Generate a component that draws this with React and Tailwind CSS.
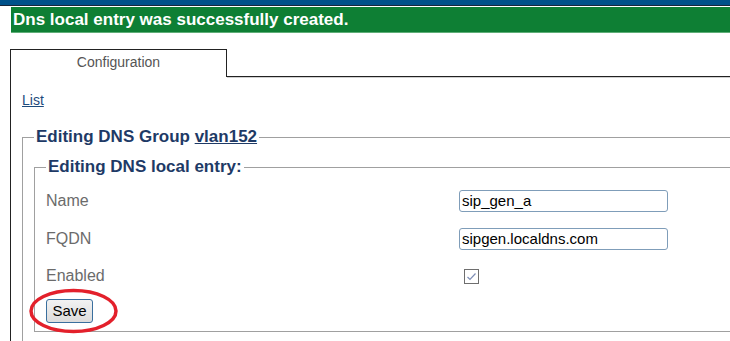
export default function App() {
  return (
    <div className="relative w-[730px] h-[341px] overflow-hidden bg-white font-['Liberation_Sans',Arial,sans-serif]">
      {/* header strip */}
      <div className="h-[6px] bg-[#00518a] border-b border-[#17263a]" />
      <div className="h-px bg-white" />
      <div className="ml-[11px] h-[26px] bg-[#0e7f34] border-b border-[#5fae78] pl-[2px] flex items-center text-[17px] leading-[20px] font-bold text-white">
        Dns local entry was successfully created.
      </div>

      {/* tabs */}
      <div className="mt-[16px] ml-[10px]">
        <div className="flex h-[28px]">
          <div className="w-[217px] border-t border-l border-r border-[#222] pt-[4px] text-center text-[14px] leading-[16px] text-[#555]">
            Configuration
          </div>
          <div className="flex-1 border-b border-[#222] shadow-[0_1px_0_#d0d0d0]" />
        </div>

        <div className="border-l border-[#222] pl-[11px] pt-[15px] pb-[40px]">
          <a href="#" className="block w-fit text-[14px] leading-[16px] text-[#1d4a7c] underline">
            List
          </a>

          <fieldset className="mt-[19px] w-[800px] border border-[#a0a0a0] pl-[11px] pt-[10px] pb-[40px]">
            <legend className="px-[2px] text-[17px] leading-[20px] font-bold text-[#1e3a66]">
              Editing DNS Group <span className="underline">vlan152</span>
            </legend>

            <fieldset className="w-[780px] border border-[#a0a0a0] pl-[11px] pt-[13px] pb-[8px]">
              <legend className="px-[2px] text-[17px] leading-[20px] font-bold text-[#1e3a66]">
                Editing DNS local entry:
              </legend>

              <div className="flex items-center h-[22px]">
                <div className="w-[413px] text-[16px] text-[#6b6b6b]">Name</div>
                <div className="w-[209px] h-[22px] border border-[#7f9db9] rounded-[3px] px-[2px] flex items-center text-[15px] text-black">
                  sip_gen_a
                </div>
              </div>

              <div className="flex items-center h-[22px] mt-[16px]">
                <div className="w-[413px] text-[16px] text-[#6b6b6b]">FQDN</div>
                <div className="w-[209px] h-[22px] border border-[#7f9db9] rounded-[3px] px-[2px] flex items-center text-[15px] text-black">
                  sipgen.localdns.com
                </div>
              </div>

              <div className="flex items-center h-[22px] mt-[15px]">
                <div className="w-[413px] text-[16px] text-[#6b6b6b]">Enabled</div>
                <div className="ml-[5px] w-[15px] h-[15px] border border-[#6e6e6e] bg-white flex items-center justify-center">
                  <svg width="11" height="11" viewBox="0 0 11 11">
                    <path d="M1.5 6 L4 8.5 L9.5 2.5" fill="none" stroke="#7d8db5" strokeWidth="1.2" />
                  </svg>
                </div>
              </div>

              <button className="block mt-[12px] w-[47px] h-[24px] border border-[#3a6f9e] rounded-[3px] bg-gradient-to-b from-[#f2f2f2] to-[#dcdcdc] text-[15px] leading-[18px] text-black">
                Save
              </button>
            </fieldset>
          </fieldset>
        </div>
      </div>

      {/* annotation ellipse */}
      <svg className="absolute left-[29px] top-[288px]" width="90" height="46" viewBox="0 0 90 46">
        <ellipse cx="44.5" cy="23" rx="42.5" ry="20.5" fill="none" stroke="#e3202b" strokeWidth="3.5" />
      </svg>
    </div>
  );
}
